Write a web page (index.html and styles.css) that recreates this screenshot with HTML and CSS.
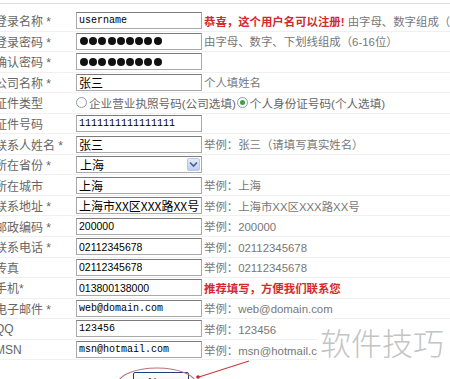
FILE: index.html
```html
<!DOCTYPE html>
<html lang="zh-CN">
<head>
    <meta charset="UTF-8">
    <title>会员注册</title>
    <link rel="stylesheet" href="styles.css">
</head>
<body>
<div class="page">
    <div class="topbar"></div>
    <div class="form">
        <div class="row">
            <span class="label">登录名称 *</span>
            <span class="field"><input class="mono" type="text" value="username" readonly></span>
            <span class="hint"><b class="warn">恭喜，这个用户名可以注册!</b> 由字母、数字组成（4-16位）</span>
        </div>
        <div class="row">
            <span class="label">登录密码 *</span>
            <span class="field"><span class="box dots"><i></i><i></i><i></i><i></i><i></i><i></i><i></i><i></i><i></i></span></span>
            <span class="hint">由字母、数字、下划线组成（6-16位）</span>
        </div>
        <div class="row">
            <span class="label">确认密码 *</span>
            <span class="field"><span class="box dots"><i></i><i></i><i></i><i></i><i></i><i></i><i></i><i></i><i></i></span></span>
            <span class="hint"></span>
        </div>
        <div class="row">
            <span class="label">公司名称 *</span>
            <span class="field"><input class="cn" type="text" value="张三" readonly></span>
            <span class="hint">个人填姓名</span>
        </div>
        <div class="row">
            <span class="label">证件类型</span>
            <span class="radios">
                <span class="radio"></span>企业营业执照号码(公司选填)
                <span class="radio checked"></span>个人身份证号码(个人选填)
            </span>
        </div>
        <div class="row">
            <span class="label">证件号码</span>
            <span class="field"><input class="mono" type="text" value="1111111111111111" readonly></span>
            <span class="hint"></span>
        </div>
        <div class="row">
            <span class="label">联系人姓名 *</span>
            <span class="field"><input class="cn" type="text" value="张三" readonly></span>
            <span class="hint">举例：张三（请填写真实姓名）</span>
        </div>
        <div class="row">
            <span class="label">所在省份 *</span>
            <span class="field">
                <span class="box select">上海<span class="arrow"><svg width="9" height="7" viewBox="0 0 9 7"><path d="M1 1.5 L4.5 5 L8 1.5" fill="none" stroke="#4d6185" stroke-width="1.6"/></svg></span></span>
            </span>
            <span class="hint"></span>
        </div>
        <div class="row">
            <span class="label">所在城市</span>
            <span class="field"><input class="cn" type="text" value="上海" readonly></span>
            <span class="hint">举例：上海</span>
        </div>
        <div class="row">
            <span class="label">联系地址 *</span>
            <span class="field"><input class="cn" type="text" value="上海市XX区XXX路XX号" readonly></span>
            <span class="hint">举例：上海市XX区XXX路XX号</span>
        </div>
        <div class="row">
            <span class="label">邮政编码 *</span>
            <span class="field"><input class="num" type="text" value="200000" readonly></span>
            <span class="hint">举例：200000</span>
        </div>
        <div class="row">
            <span class="label">联系电话 *</span>
            <span class="field"><input class="num" type="text" value="02112345678" readonly></span>
            <span class="hint">举例：02112345678</span>
        </div>
        <div class="row">
            <span class="label">传真</span>
            <span class="field"><input class="num" type="text" value="02112345678" readonly></span>
            <span class="hint">举例：02112345678</span>
        </div>
        <div class="row">
            <span class="label">手机*</span>
            <span class="field"><input class="num" type="text" value="013800138000" readonly></span>
            <span class="hint"><b class="warn">推荐填写，方便我们联系您</b></span>
        </div>
        <div class="row">
            <span class="label">电子邮件 *</span>
            <span class="field"><input class="mono" type="text" value="web@domain.com" readonly></span>
            <span class="hint">举例：web@domain.com</span>
        </div>
        <div class="row">
            <span class="label">QQ</span>
            <span class="field"><input class="mono" type="text" value="123456" readonly></span>
            <span class="hint">举例：123456</span>
        </div>
        <div class="row">
            <span class="label">MSN</span>
            <span class="field"><input class="mono" type="text" value="msn@hotmail.com" readonly></span>
            <span class="hint">举例：msn@hotmail.com</span>
        </div>
        <div class="actions">
            <button class="submit-btn">注 册</button>
        </div>
    </div>

    <div class="watermark">软件技巧</div>

    <svg class="marks" width="450" height="379" viewBox="0 0 450 379">
        <ellipse cx="157" cy="384" rx="39" ry="16" fill="none" stroke="#b9707e" stroke-width="1.2"/>
        <line x1="249" y1="361" x2="199" y2="377" stroke="#c43b3b" stroke-width="1.3"/>
        <circle cx="198" cy="377" r="1.8" fill="#c0282d"/>
    </svg>
</div>
</body>
</html>
```

FILE: styles.css
```css
body {
    margin: 0;
    background-color: #fff;
    font-family: "Liberation Sans", "Noto Sans CJK SC", sans-serif;
    font-size: 12px;
    color: #666;
}
.page {
    position: relative;
    width: 450px;
    height: 379px;
    overflow: hidden;
}
.topbar {
    height: 3px;
    border-bottom: 1px solid #dcdcdc;
}
.form {
    padding-top: 7px;
    margin-left: -5px;
}
.row {
    display: grid;
    grid-template-columns: 81px 128px auto;
    align-items: center;
    height: 20.56px;
    box-sizing: border-box;
    border-bottom: 1px solid #f0f0f0;
    white-space: nowrap;
}
.label {
    color: #666;
}
.field input,
.box {
    display: block;
    width: 126px;
    height: 17px;
    box-sizing: border-box;
    margin: 0;
    padding: 0 2px;
    border: 1px solid #a9a9a9;
    border-top-color: #7c7c7c;
    background-color: #fff;
    color: #000;
    outline: none;
}
.mono {
    font-family: "Liberation Mono", monospace;
    font-size: 10px;
}
.num {
    font-family: "Liberation Sans", sans-serif;
    font-size: 10.5px;
}
.cn {
    font-family: "Noto Sans CJK SC", sans-serif;
    font-size: 12px;
}
.dots {
    display: flex;
    align-items: center;
    gap: 1.2px;
    padding-left: 3px;
}
.dots i {
    width: 8px;
    height: 8px;
    border-radius: 50%;
    background-color: #111;
}
.select {
    display: flex;
    align-items: center;
    justify-content: space-between;
    padding: 0 1px 0 3px;
    font-family: "Noto Sans CJK SC", sans-serif;
    font-size: 12px;
    line-height: 15px;
}
.arrow {
    display: flex;
    align-items: center;
    justify-content: center;
    width: 13px;
    height: 13px;
    box-sizing: border-box;
    border: 1px solid #b7c8ec;
    border-radius: 2px;
    background: linear-gradient(#e3ebfd, #bccdf5);
}
.hint {
    font-size: 11.4px;
    color: #777;
}
.warn {
    color: #d22a2e;
}
.radios {
    grid-column: 2 / 4;
    display: flex;
    align-items: center;
    font-size: 11.6px;
    color: #666;
}
.radio {
    width: 11px;
    height: 11px;
    box-sizing: border-box;
    margin-right: 2px;
    border: 1px solid #8b9aa9;
    border-radius: 50%;
    background-color: #fff;
}
.radio.checked {
    margin-left: 1px;
    display: flex;
    align-items: center;
    justify-content: center;
}
.radio.checked::after {
    content: "";
    width: 5px;
    height: 5px;
    border-radius: 50%;
    background-color: #3fa03f;
}
.actions {
    padding: 12px 0 0 138px;
}
.submit-btn {
    width: 56px;
    height: 22px;
    border: 1px solid #1d3f78;
    border-radius: 2px;
    background: linear-gradient(#fff, #e6e3d6);
    font-family: "Noto Sans CJK SC", sans-serif;
    font-size: 12px;
}
.watermark {
    position: absolute;
    left: 317px;
    top: 322px;
    padding: 0 6px 0 3px;
    white-space: nowrap;
    background-color: #fff;
    font-family: "Noto Sans CJK SC", sans-serif;
    font-size: 31px;
    font-weight: 300;
    line-height: 40px;
    color: #c4c4c4;
}
.marks {
    position: absolute;
    left: 0;
    top: 0;
    pointer-events: none;
}
```
